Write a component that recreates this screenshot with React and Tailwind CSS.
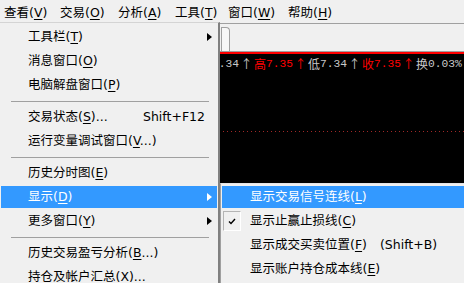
import React from "react";

const U = ({ children }) => (
  <span className="underline decoration-1 underline-offset-[2px]">{children}</span>
);

// main dropdown row
function Row({ children, active, shortcut, arrow }) {
  return (
    <div className="h-[24px] py-px px-px">
      <div
        className={`h-full flex items-center pl-[27px] leading-[22px] ${
          active ? "bg-[#3399ff] text-white" : ""
        }`}
      >
        <span className="flex-1 whitespace-nowrap">{children}</span>
        {shortcut && <span className="mr-[12px] whitespace-nowrap">{shortcut}</span>}
        {arrow && (
          <span
            className={`mr-[5px] w-0 h-0 border-y-[4px] border-y-transparent border-l-[5px] ${
              active ? "border-l-white" : "border-l-black"
            }`}
          />
        )}
      </div>
    </div>
  );
}

const Sep = () => (
  <div className="h-[8px] pt-[4px] pl-[11px] pr-[9px]">
    <div className="h-px bg-[#a0a0a0]" />
  </div>
);

// submenu row
function SubRow({ children, active, checked }) {
  return (
    <div className="h-[24px] py-px px-px">
      <div
        className={`h-full flex items-center leading-[22px] ${
          active ? "bg-[#3399ff] text-white" : ""
        }`}
      >
        <div className="w-[28px] h-full flex items-center">
          {checked && (
            <div className="ml-px w-[18px] h-[20px] border-t border-l border-[#b4b4b4] border-b border-r border-b-white border-r-white flex items-center justify-center">
              <svg width="8" height="7" viewBox="0 0 8 7">
                <path d="M1 3.5 L3 5.5 L7 1" fill="none" stroke="#000" strokeWidth="1.4" />
              </svg>
            </div>
          )}
        </div>
        <span className="whitespace-nowrap">{children}</span>
      </div>
    </div>
  );
}

const Cjk = ({ children }) => (
  <span className="font-['Noto_Sans_CJK_SC',sans-serif] text-[12px] w-[12px] text-center">{children}</span>
);
const Num = ({ children }) => (
  <span className="font-['Liberation_Mono',monospace] text-[11.25px]">{children}</span>
);
const Up = () => (
  <span className="font-['Noto_Sans_CJK_SC',sans-serif] text-[12px] w-[15px] text-center">↑</span>
);

export default function App() {
  return (
    <div className="relative w-[464px] h-[283px] overflow-hidden flex flex-col bg-black font-['DejaVu_Sans','Noto_Sans_CJK_SC',sans-serif] text-[12.5px] text-black">
      {/* ===== MENU BAR ===== */}
      <div className="h-[24px] shrink-0 bg-[#f0f0f0] border-b border-[#a0a0a0] flex pl-[4px] pt-[4px] leading-[18px] whitespace-nowrap">
        <span className="w-[56px]">查看(<U>V</U>)</span>
        <span className="w-[58px]">交易(<U>O</U>)</span>
        <span className="w-[57px]">分析(<U>A</U>)</span>
        <span className="w-[53px]">工具(<U>T</U>)</span>
        <span className="w-[60px]">窗口(<U>W</U>)</span>
        <span>帮助(<U>H</U>)</span>
      </div>

      {/* ===== TOOLBAR / TABS ===== */}
      <div className="h-[27px] shrink-0 bg-[#f0f0f0] pt-[3px]">
        <div className="ml-[221px] w-[9px] h-[24px] border-l border-t border-r border-[#a0a0a0] rounded-tr-[4px] bg-[#f7f7f7]" />
      </div>
      <div className="h-px shrink-0 bg-[#a0a0a0]" />
      <div className="h-[2px] shrink-0 bg-[#ff0000]" />

      {/* ===== CHART ===== */}
      <div className="flex-1 bg-black">
        <div className="h-[16px] mt-[2px] pl-[200px] flex items-center whitespace-nowrap text-[#c8c8c8]">
          <Cjk>开</Cjk>
          <Num>7.34</Num>
          <Up />
          <span className="flex items-center text-[#ff0000]">
            <Cjk>高</Cjk>
            <Num>7.35</Num>
            <Up />
          </span>
          <Cjk>低</Cjk>
          <Num>7.34</Num>
          <Up />
          <span className="flex items-center text-[#ff0000]">
            <Cjk>收</Cjk>
            <Num>7.35</Num>
            <Up />
          </span>
          <Cjk>换</Cjk>
          <Num>0.03%</Num>
        </div>
        <svg className="block mt-[59px]" width="464" height="1">
          <line x1="223" y1="0.5" x2="464" y2="0.5" stroke="#a02828" strokeDasharray="1 3" />
        </svg>
      </div>

      {/* ===== VIEW MENU (dropdown) ===== */}
      <div className="absolute left-0 top-[22px] w-[220px] h-[280px] bg-[#f0f0f0] border-t border-[#d4d4d4] border-r-2 border-r-[#808080] pt-[2px] leading-[22px]">
        <Row arrow>工具栏(<U>T</U>)</Row>
        <Row>消息窗口(<U>O</U>)</Row>
        <Row>电脑解盘窗口(<U>P</U>)</Row>
        <Sep />
        <Row shortcut="Shift+F12">交易状态(<U>S</U>)...</Row>
        <Row>运行变量调试窗口(<U>V</U>...)</Row>
        <Sep />
        <Row>历史分时图(<U>E</U>)</Row>
        <Row active arrow>显示(<U>D</U>)</Row>
        <Row arrow>更多窗口(<U>Y</U>)</Row>
        <Sep />
        <Row>历史交易盈亏分析(<U>B</U>...)</Row>
        <Row>持仓及帐户汇总(<U>X</U>)...</Row>
      </div>

      {/* ===== 显示 SUBMENU ===== */}
      <div className="absolute left-[220px] top-[183px] w-[260px] h-[120px] bg-[#f0f0f0] border-l border-t border-[#a0a0a0] border-t-[#e4e4e4] pt-px">
        <SubRow active>显示交易信号连线(<U>L</U>)</SubRow>
        <SubRow checked>显示止赢止损线(<U>C</U>)</SubRow>
        <SubRow>
          显示成交买卖位置(<U>F</U>)<span className="ml-[13px]">(Shift+B)</span>
        </SubRow>
        <SubRow>显示账户持仓成本线(<U>E</U>)</SubRow>
      </div>
    </div>
  );
}
